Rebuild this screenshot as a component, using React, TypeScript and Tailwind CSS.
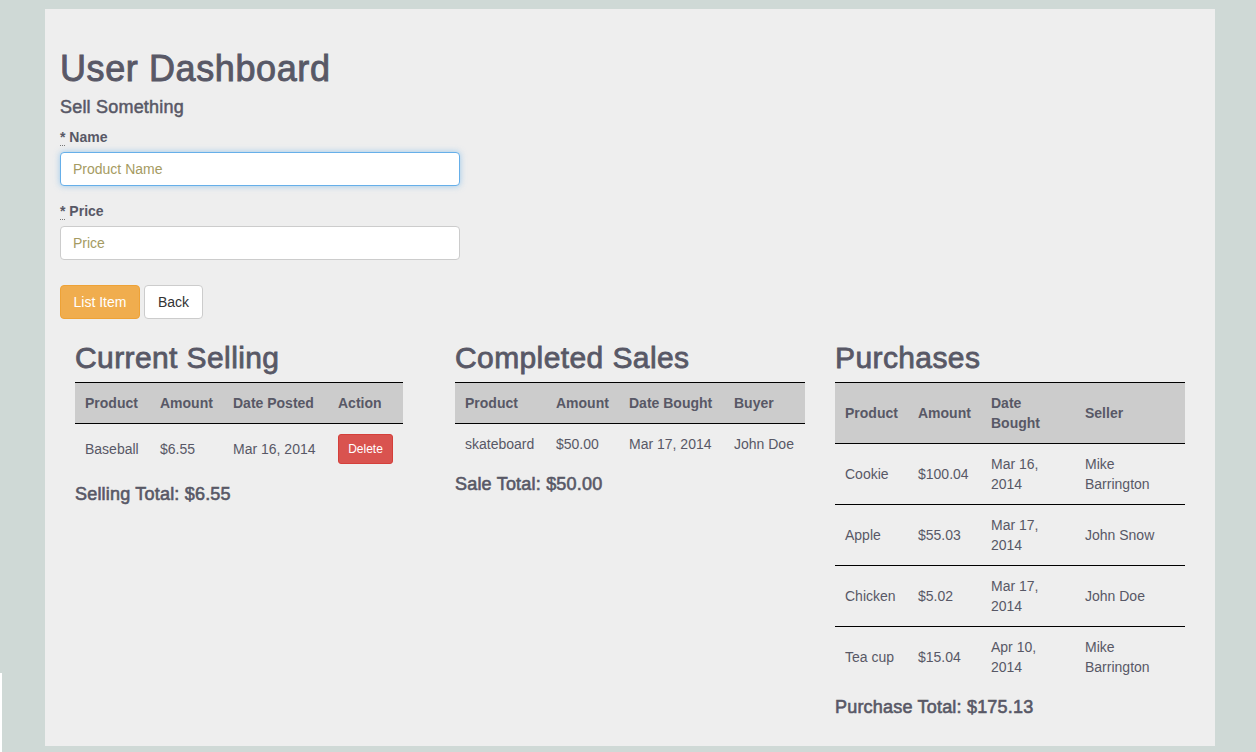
type Col = { label: string; w: string };

const sellingCols: Col[] = [
  { label: "Product", w: "w-[75px]" },
  { label: "Amount", w: "w-[73px]" },
  { label: "Date Posted", w: "w-[105px]" },
  { label: "Action", w: "w-[75px]" },
];

const salesCols: Col[] = [
  { label: "Product", w: "w-[91px]" },
  { label: "Amount", w: "w-[73px]" },
  { label: "Date Bought", w: "w-[105px]" },
  { label: "Buyer", w: "w-[81px]" },
];

const purchaseCols: Col[] = [
  { label: "Product", w: "w-[73px]" },
  { label: "Amount", w: "w-[73px]" },
  { label: "Date Bought", w: "w-[94px]" },
  { label: "Seller", w: "w-[110px]" },
];

const purchases = [
  ["Cookie", "$100.04", "Mar 16, 2014", "Mike Barrington"],
  ["Apple", "$55.03", "Mar 17, 2014", "John Snow"],
  ["Chicken", "$5.02", "Mar 17, 2014", "John Doe"],
  ["Tea cup", "$15.04", "Apr 10, 2014", "Mike Barrington"],
];

function DataTable({
  cols,
  width,
  children,
}: {
  cols: Col[];
  width: string;
  children: React.ReactNode;
}) {
  return (
    <table className={`${width} table-fixed border-collapse text-[14px] leading-5`}>
      <thead>
        <tr className="border-y border-black bg-[#cccccc]">
          {cols.map((c) => (
            <th key={c.label} className={`${c.w} p-[10px] text-left align-middle font-bold`}>
              {c.label}
            </th>
          ))}
        </tr>
      </thead>
      <tbody className="divide-y divide-black">{children}</tbody>
    </table>
  );
}

function Field({ label, placeholder, focused }: { label: string; placeholder: string; focused?: boolean }) {
  return (
    <div>
      <label className="mb-[5px] block text-[14px] font-bold leading-5">
        <abbr className="border-b border-dotted border-[#777] no-underline">*</abbr> {label}
      </label>
      <input
        placeholder={placeholder}
        className={`block h-[34px] w-[400px] rounded-[4px] border bg-white px-3 text-[14px] outline-none placeholder:text-[#a59b62] ${
          focused
            ? "border-[#66afe9] shadow-[0_0_6px_rgba(102,175,233,0.6)]"
            : "border-[#cccccc]"
        }`}
      />
    </div>
  );
}

function Total({ children }: { children: React.ReactNode }) {
  return (
    <h4 className="mt-[10px] text-[18px] leading-5 tracking-[0.2px] [-webkit-text-stroke:0.6px_#585866]">
      {children}
    </h4>
  );
}

export default function App() {
  return (
    <div
      className="relative min-h-[752px] bg-[#cfd9d6] pl-[45px] pt-[9px] pb-[6px] text-[#585866]"
      style={{ fontFamily: '"Liberation Sans", Arial, sans-serif' }}
    >
      <div className="absolute bottom-0 left-0 h-[79px] w-[2px] bg-white" />
      <div className="h-[737px] w-[1170px] bg-[#eeeeee] px-[15px] pt-[40px]">
        <h1 className="text-[36px] leading-10 tracking-[0.6px] [-webkit-text-stroke:0.9px_#585866]">
          User Dashboard
        </h1>
        <h3 className="mt-2 text-[18px] leading-5 tracking-[0.2px] [-webkit-text-stroke:0.5px_#585866]">
          Sell Something
        </h3>

        <div className="mt-[10px]">
          <Field label="Name" placeholder="Product Name" focused />
        </div>
        <div className="mt-[15px]">
          <Field label="Price" placeholder="Price" />
        </div>

        <div className="mt-[25px] flex gap-1">
          <button className="h-[34px] w-[80px] rounded-[4px] border border-[#eea236] bg-[#f0ad4e] text-[14px] text-white">
            List Item
          </button>
          <button className="h-[34px] w-[59px] rounded-[4px] border border-[#cccccc] bg-white text-[14px] text-[#333]">
            Back
          </button>
        </div>

        <div className="mt-[22px] flex">
          <section className="w-[380px] px-[15px]">
            <h2 className="mb-2 text-[30px] leading-[33px] tracking-[0.4px] [-webkit-text-stroke:0.8px_#585866]">
              Current Selling
            </h2>
            <DataTable cols={sellingCols} width="w-[328px]">
              <tr>
                <td className="p-[10px] align-middle">Baseball</td>
                <td className="p-[10px] align-middle">$6.55</td>
                <td className="p-[10px] align-middle">Mar 16, 2014</td>
                <td className="p-[10px] align-middle">
                  <button className="h-[30px] w-[55px] rounded-[3px] border border-[#d43f3a] bg-[#d9534f] text-[12px] text-white">
                    Delete
                  </button>
                </td>
              </tr>
            </DataTable>
            <Total>Selling Total: $6.55</Total>
          </section>

          <section className="w-[380px] px-[15px]">
            <h2 className="mb-2 text-[30px] leading-[33px] tracking-[0.4px] [-webkit-text-stroke:0.8px_#585866]">
              Completed Sales
            </h2>
            <DataTable cols={salesCols} width="w-[350px]">
              <tr>
                <td className="p-[10px] align-middle">skateboard</td>
                <td className="p-[10px] align-middle">$50.00</td>
                <td className="p-[10px] align-middle">Mar 17, 2014</td>
                <td className="p-[10px] align-middle">John Doe</td>
              </tr>
            </DataTable>
            <Total>Sale Total: $50.00</Total>
          </section>

          <section className="w-[380px] px-[15px]">
            <h2 className="mb-2 text-[30px] leading-[33px] tracking-[0.4px] [-webkit-text-stroke:0.8px_#585866]">
              Purchases
            </h2>
            <DataTable cols={purchaseCols} width="w-[350px]">
              {purchases.map((row) => (
                <tr key={row[0]}>
                  {row.map((cell, i) => (
                    <td key={i} className="p-[10px] align-middle">
                      {cell}
                    </td>
                  ))}
                </tr>
              ))}
            </DataTable>
            <Total>Purchase Total: $175.13</Total>
          </section>
        </div>
      </div>
    </div>
  );
}
